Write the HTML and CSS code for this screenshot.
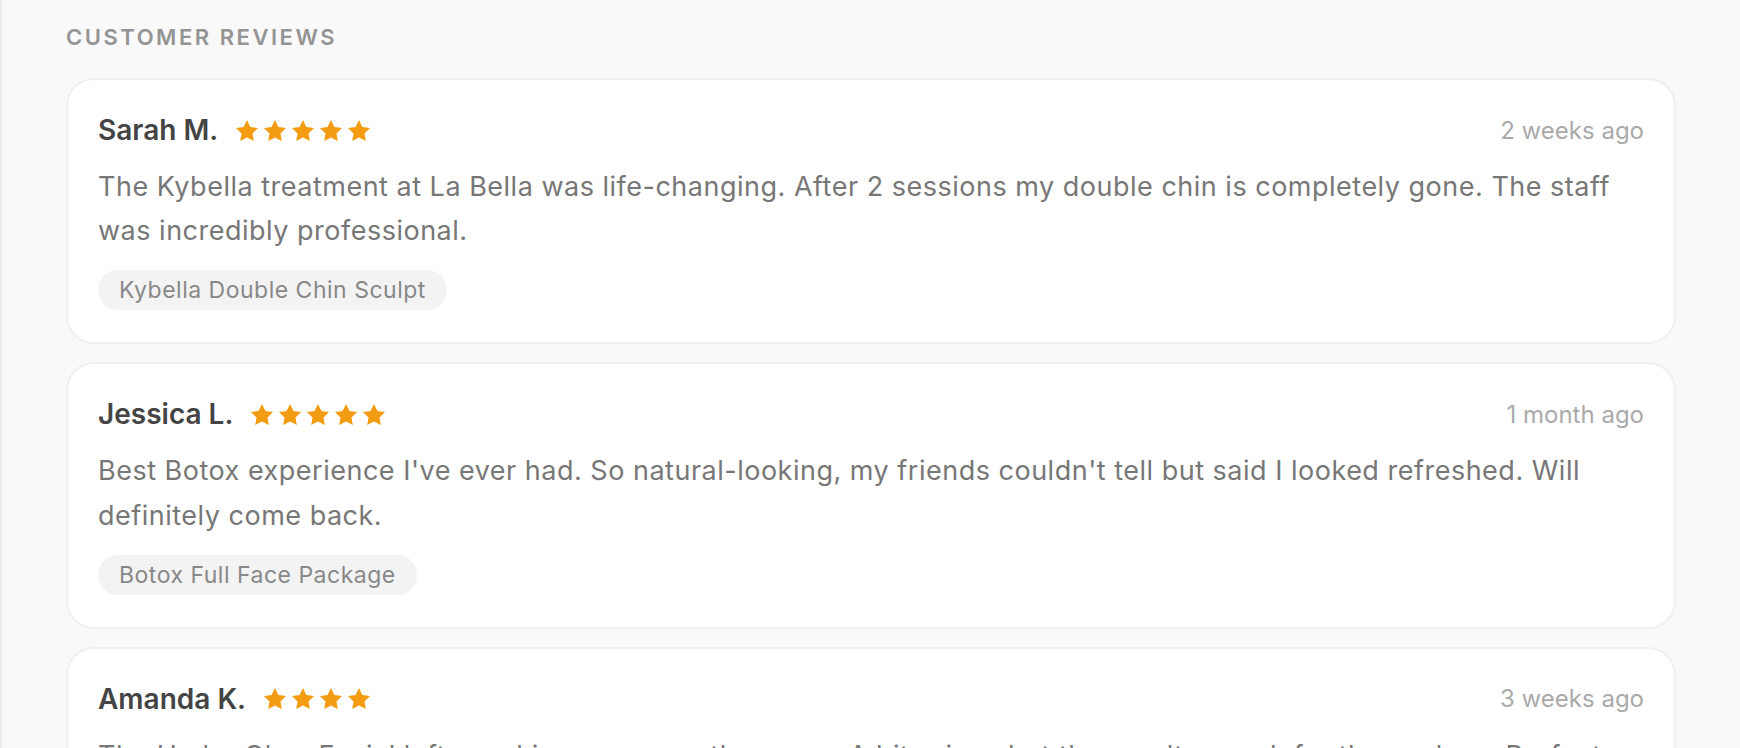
FILE: index.html
```html
<!DOCTYPE html>
<html>
<head>
    <title>Customer Reviews</title>
    <link rel="stylesheet" href="styles.css">
</head>
<body>
    <div class="page">
        <h2 class="section-title">Customer Reviews</h2>

        <div class="review">
            <div class="review-header">
                <div class="reviewer">
                    <span class="reviewer-name">Sarah M.</span>
                    <span class="stars">
                        <svg viewBox="2 2 20 19.02"><polygon points="12,2 15.09,8.26 22,9.27 17,14.14 18.18,21.02 12,17.77 5.82,21.02 7,14.14 2,9.27 8.91,8.26"/></svg>
                        <svg viewBox="2 2 20 19.02"><polygon points="12,2 15.09,8.26 22,9.27 17,14.14 18.18,21.02 12,17.77 5.82,21.02 7,14.14 2,9.27 8.91,8.26"/></svg>
                        <svg viewBox="2 2 20 19.02"><polygon points="12,2 15.09,8.26 22,9.27 17,14.14 18.18,21.02 12,17.77 5.82,21.02 7,14.14 2,9.27 8.91,8.26"/></svg>
                        <svg viewBox="2 2 20 19.02"><polygon points="12,2 15.09,8.26 22,9.27 17,14.14 18.18,21.02 12,17.77 5.82,21.02 7,14.14 2,9.27 8.91,8.26"/></svg>
                        <svg viewBox="2 2 20 19.02"><polygon points="12,2 15.09,8.26 22,9.27 17,14.14 18.18,21.02 12,17.77 5.82,21.02 7,14.14 2,9.27 8.91,8.26"/></svg>
                    </span>
                </div>
                <span class="review-date">2 weeks ago</span>
            </div>
            <p class="review-text">The Kybella treatment at La Bella was life-changing. After 2 sessions my double chin is completely gone. The staff was incredibly professional.</p>
            <span class="review-tag">Kybella Double Chin Sculpt</span>
        </div>

        <div class="review">
            <div class="review-header">
                <div class="reviewer">
                    <span class="reviewer-name">Jessica L.</span>
                    <span class="stars">
                        <svg viewBox="2 2 20 19.02"><polygon points="12,2 15.09,8.26 22,9.27 17,14.14 18.18,21.02 12,17.77 5.82,21.02 7,14.14 2,9.27 8.91,8.26"/></svg>
                        <svg viewBox="2 2 20 19.02"><polygon points="12,2 15.09,8.26 22,9.27 17,14.14 18.18,21.02 12,17.77 5.82,21.02 7,14.14 2,9.27 8.91,8.26"/></svg>
                        <svg viewBox="2 2 20 19.02"><polygon points="12,2 15.09,8.26 22,9.27 17,14.14 18.18,21.02 12,17.77 5.82,21.02 7,14.14 2,9.27 8.91,8.26"/></svg>
                        <svg viewBox="2 2 20 19.02"><polygon points="12,2 15.09,8.26 22,9.27 17,14.14 18.18,21.02 12,17.77 5.82,21.02 7,14.14 2,9.27 8.91,8.26"/></svg>
                        <svg viewBox="2 2 20 19.02"><polygon points="12,2 15.09,8.26 22,9.27 17,14.14 18.18,21.02 12,17.77 5.82,21.02 7,14.14 2,9.27 8.91,8.26"/></svg>
                    </span>
                </div>
                <span class="review-date">1 month ago</span>
            </div>
            <p class="review-text">Best Botox experience I've ever had. So natural-looking, my friends couldn't tell but said I looked refreshed. Will definitely come back.</p>
            <span class="review-tag">Botox Full Face Package</span>
        </div>

        <div class="review">
            <div class="review-header">
                <div class="reviewer">
                    <span class="reviewer-name">Amanda K.</span>
                    <span class="stars">
                        <svg viewBox="2 2 20 19.02"><polygon points="12,2 15.09,8.26 22,9.27 17,14.14 18.18,21.02 12,17.77 5.82,21.02 7,14.14 2,9.27 8.91,8.26"/></svg>
                        <svg viewBox="2 2 20 19.02"><polygon points="12,2 15.09,8.26 22,9.27 17,14.14 18.18,21.02 12,17.77 5.82,21.02 7,14.14 2,9.27 8.91,8.26"/></svg>
                        <svg viewBox="2 2 20 19.02"><polygon points="12,2 15.09,8.26 22,9.27 17,14.14 18.18,21.02 12,17.77 5.82,21.02 7,14.14 2,9.27 8.91,8.26"/></svg>
                        <svg viewBox="2 2 20 19.02"><polygon points="12,2 15.09,8.26 22,9.27 17,14.14 18.18,21.02 12,17.77 5.82,21.02 7,14.14 2,9.27 8.91,8.26"/></svg>
                    </span>
                </div>
                <span class="review-date">3 weeks ago</span>
            </div>
            <p class="review-text">The Hydra Glow Facial left my skin more even than ever. A bit pricey but the results speak for themselves. Perfect before any event.</p>
            <span class="review-tag">Hydra Glow Facial</span>
        </div>
    </div>
</body>
</html>
```

FILE: styles.css
```css
html, body {
    margin: 0;
    height: 100%;
    overflow: hidden;
}
body {
    font-family: Inter, "Noto Sans", sans-serif;
    background-color: #f9f9f9;
}
.page {
    box-sizing: border-box;
    height: 100%;
    border-left: 2px solid #ebebeb;
    padding: 24px 64px 0 64px;
}
.section-title {
    margin: 0 0 27px 0;
    font-size: 22px;
    line-height: 27px;
    font-weight: 600;
    letter-spacing: 0.115em;
    text-transform: uppercase;
    color: #949494;
}
.review {
    background-color: white;
    border: 2px solid #f0f0f0;
    border-radius: 28px;
    padding: 30px 30px 32px 30px;
    margin-bottom: 18px;
}
.review-header {
    display: flex;
    align-items: center;
    justify-content: space-between;
    height: 40px;
}
.reviewer {
    display: flex;
    align-items: center;
}
.reviewer-name {
    font-size: 28px;
    font-weight: 600;
    color: #444;
}
.stars {
    display: flex;
    gap: 6px;
    margin-left: 18px;
}
.stars svg {
    width: 22px;
    height: 21px;
    fill: #f39c12;
}
.review-date {
    font-size: 24px;
    color: #aaa;
}
.review-text {
    margin: 15px 0 17px 0;
    font-size: 27px;
    line-height: 44.2px;
    letter-spacing: 0.5px;
    color: #777;
}
.review-tag {
    display: inline-block;
    height: 40px;
    line-height: 40px;
    padding: 0 21px;
    border-radius: 20px;
    background-color: #f3f3f3;
    font-size: 23px;
    letter-spacing: 0.5px;
    color: #888;
}
```
